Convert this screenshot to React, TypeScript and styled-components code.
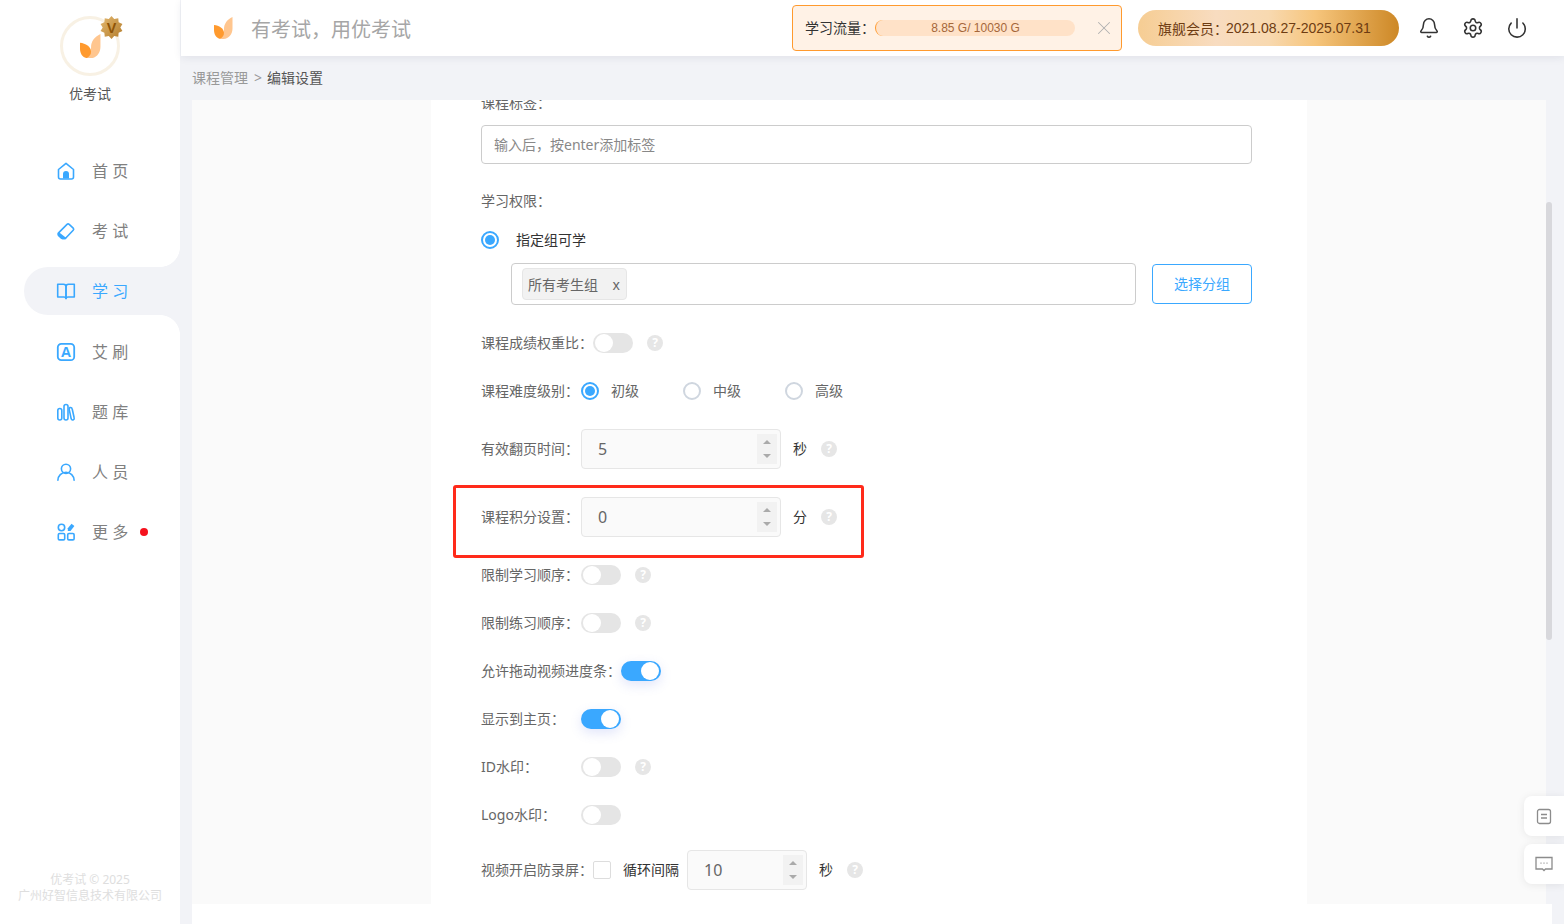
import React from "react";
import styled, { createGlobalStyle } from "styled-components";
import { Bell, Settings, Power, X } from "lucide-react";

const PAGE_BG = "#f2f3f7";
const BLUE = "#3aa8ff";
const ARIAL_STACK = `"Liberation Sans", "Noto Sans CJK SC", sans-serif`;

const Global = createGlobalStyle`
  html, body { margin: 0; padding: 0; height: 100%; overflow: hidden; background: ${PAGE_BG}; }
  body { font-family: "Noto Sans", "Noto Sans CJK SC", sans-serif; font-size: 14px; }
  * { box-sizing: border-box; }
`;

const Shell = styled.div`display: flex; width: 1564px; height: 924px; overflow: hidden; position: relative;`;

/* Sidebar */
const Sidebar = styled.aside`
  width: 180px; flex: none; background: #fff; display: flex; flex-direction: column;
`;
const Brand = styled.div`
  display: flex; flex-direction: column; align-items: center; padding-top: 16px; height: 147px;
`;
const LogoRing = styled.div`
  position: relative; width: 60px; height: 60px; border-radius: 50%; border: 3px solid #f8f1e4;
  display: flex; align-items: center; justify-content: center; background: #fff;
`;
const Badge = styled.svg`position: absolute; top: -3px; right: -6px; width: 23px; height: 23px;`;
const BrandName = styled.div`margin-top: 8px; color: #555; line-height: 20px;`;
const Nav = styled.nav`display: flex; flex-direction: column; gap: 12.2px;`;
const NavItem = styled.div<{ $active?: boolean }>`
  position: relative; height: 48px; margin-left: 24px; padding-left: 33px; display: flex; align-items: center; gap: 17px;
  font-size: 16px; color: ${(p) => (p.$active ? BLUE : "#808080")};
  background: ${(p) => (p.$active ? PAGE_BG : "transparent")};
  border-radius: 24px 0 0 24px;
  ${(p) => p.$active && `
    &::before, &::after { content: ""; position: absolute; right: 0; width: 20px; height: 20px; }
    &::before { top: -20px; background: radial-gradient(circle at 0 0, transparent 19.6px, ${PAGE_BG} 20.2px); }
    &::after { bottom: -20px; background: radial-gradient(circle at 0 100%, transparent 19.6px, ${PAGE_BG} 20.2px); }
  `}
`;
const NavLabel = styled.span`padding-bottom: 2px;`;
const NavIcon = styled.svg`
  width: 18px; height: 18px; flex: none; fill: none; stroke: ${BLUE}; stroke-width: 1.6; overflow: visible;
  stroke-linecap: round; stroke-linejoin: round;
`;
const RedDot = styled.span`width: 8px; height: 8px; border-radius: 50%; background: #f5121d; margin-left: -5px;`;
const Copyright = styled.div`
  margin-top: auto; padding-bottom: 20px; text-align: center; color: #dedede; font-size: 12px; line-height: 16px;
`;

/* Right column */
const Column = styled.div`flex: 1; min-width: 0; display: flex; flex-direction: column; margin-left: 1px;`;
const Header = styled.header`
  height: 56px; flex: none; background: #fff; display: flex; align-items: center; padding: 0 36px 0 33px;
  box-shadow: 0 2px 8px rgba(30, 40, 80, 0.08); position: relative; z-index: 1;
`;
const Title = styled.div`margin-left: 18px; font-size: 20px; color: #a6a6a6;`;
const Alert = styled.div`
  margin-left: auto; width: 330px; height: 46px; background: #fff2e6; border: 1px solid #ff9a2e; border-radius: 4px;
  display: flex; align-items: center; padding-left: 12px; color: #333;
`;
const AlertLabel = styled.span`width: 70px; flex: none; padding-bottom: 2px;`;
const FlowBar = styled.div`
  width: 200px; height: 16px; border-radius: 8px; background: #ffe2c8; border-left: 1px solid #ff9a2e;
  display: flex; align-items: center; justify-content: center; font-family: ${ARIAL_STACK}; font-size: 12px; color: #a5673a;
`;
const CloseBtn = styled.span`margin-left: 18px; display: flex; color: #b0b0b0;`;
const MemberPill = styled.div`
  margin-left: 16px; width: 261px; height: 36px; border-radius: 18px; padding-left: 20px;
  display: flex; align-items: center; color: #6e3c12;
  background: linear-gradient(90deg, #f6cd93 0%, #f8dcc0 30%, #f8d9b0 50%, #f6c57c 68%, #cd8826 100%);
`;
const MemberDate = styled.span`margin-left: -2px; font-family: ${ARIAL_STACK};`;
const HeadIcons = styled.div`margin-left: 19px; display: flex; gap: 22px; color: #333;`;

const Body = styled.main`flex: 1; min-height: 0; padding: 12px 12px 0 11px; display: flex;`;
const Panel = styled.div`
  flex: 1; min-width: 0; display: flex; flex-direction: column; background: ${PAGE_BG}; border-radius: 8px 8px 0 0;
  overflow: hidden;
`;
const Crumbs = styled.div`height: 32px; flex: none; display: flex; align-items: flex-start; line-height: 20px; color: #999;`;
const CrumbSep = styled.span`margin: 0 5px 0 6px;`;
const CrumbNow = styled.span`color: #555;`;
const Content = styled.div`flex: 1; min-height: 0; display: flex;`;
const Viewport = styled.div`flex: 1; min-width: 0; overflow: hidden; background: #fafafa; display: flex; justify-content: center;`;
const Track = styled.div`width: 6px; flex: none;`;
const Thumb = styled.div`margin-top: 102px; height: 438px; background: #d8d8dc; border-radius: 3px;`;
const FootBar = styled.div`height: 20px; flex: none; background: #fff;`;

/* Form */
const Form = styled.form`
  width: 876px; flex: none; background: #fff; padding-left: 50px; margin-top: -9px; height: 830px; color: #666;
  display: flex; flex-direction: column;
`;
const Row = styled.div<{ $h?: number; $mt?: number }>`
  position: relative; flex: none; display: flex; align-items: center; height: ${(p) => p.$h ?? 48}px; margin-top: ${(p) => p.$mt ?? 0}px;
`;
const Label = styled.label`min-width: 100px; flex: none; white-space: nowrap; padding-bottom: 2px;`;
const TagInput = styled.div`
  width: 771px; height: 39px; margin-top: 10px; flex: none; border: 1px solid #ccc; border-radius: 4px;
  display: flex; align-items: center; padding: 0 0 2px 12px; color: #888;
`;
const Radio = styled.span<{ $on?: boolean }>`
  width: 18px; height: 18px; flex: none; border-radius: 50%; border: 2px solid ${(p) => (p.$on ? BLUE : "#cfd6df")};
  background: #fff; display: flex; align-items: center; justify-content: center;
  &::after { content: ""; width: 10px; height: 10px; border-radius: 50%; background: ${(p) => (p.$on ? BLUE : "transparent")}; }
`;
const RadioText = styled.span`margin-left: 17px; color: #333; padding-bottom: 2px;`;
const GroupRow = styled.div`margin: 11px 0 0 30px; width: 741px; flex: none; display: flex; align-items: center; gap: 16px;`;
const GroupBox = styled.div`
  width: 625px; height: 42px; border: 1px solid #ccc; border-radius: 4px; display: flex; align-items: center; padding-left: 10px;
`;
const Tag = styled.span`
  width: 105px; height: 32px; background: #f2f2f2; border: 1px solid #e6e6e6; border-radius: 4px;
  display: flex; align-items: center; justify-content: space-between; padding: 0 6px 0 5px; color: #666;
`;
const OutlineBtn = styled.button`
  width: 100px; height: 40px; background: #fff; border: 1px solid ${BLUE}; border-radius: 4px; color: ${BLUE}; font: inherit; padding: 0 0 2px;
`;
const Toggle = styled.span<{ $on?: boolean }>`
  width: 40px; height: 20px; flex: none; border-radius: 10px; padding: 1px 2px; display: flex;
  justify-content: ${(p) => (p.$on ? "flex-end" : "flex-start")};
  background: ${(p) => (p.$on ? BLUE : "#e5e5e5")};
  box-shadow: ${(p) => (p.$on ? "0 4px 12px rgba(90, 110, 230, 0.18)" : "none")};
  &::after { content: ""; width: 18px; height: 18px; border-radius: 50%; background: #fff; }
`;
const Help = styled.span`
  width: 16px; height: 16px; margin-left: 14px; flex: none; border-radius: 50%; background: #e6e6e6; color: #fff;
  font-size: 12px; font-weight: 700; line-height: 16px; text-align: center;
`;
const Choice = styled.span`display: flex; align-items: center; gap: 12px; margin-right: 44px;`;
const ChoiceText = styled.span`padding-bottom: 2px;`;
const NumberBox = styled.div<{ $w: number }>`
  width: ${(p) => p.$w}px; height: 40px; flex: none; background: #fafafa; border: 1px solid #e6e6e6; border-radius: 4px;
  display: flex; align-items: center; justify-content: space-between; padding: 0 3px 0 16px; font-size: 16px; color: #666;
`;
const Spinner = styled.span`
  width: 20px; height: 30px; background: #f2f2f2; display: flex; flex-direction: column; align-items: center; justify-content: center; gap: 10px;
`;
const ArrowUp = styled.i`width: 0; height: 0; border: 4px solid transparent; border-top: 0; border-bottom: 4px solid #aaa;`;
const ArrowDown = styled.i`width: 0; height: 0; border: 4px solid transparent; border-bottom: 0; border-top: 4px solid #aaa;`;
const Unit = styled.span`margin-left: 12px; color: #333; padding-bottom: 2px;`;
const Check = styled.span`width: 18px; height: 18px; flex: none; border: 1px solid #ddd; border-radius: 2px; background: #fff;`;
const PlainText = styled.span`margin: 0 8px 0 12px; color: #333; padding-bottom: 2px;`;
const RedFrame = styled.div`
  position: absolute; left: -28px; top: 2px; width: 411px; height: 73px; border: 3px solid #ff2a1a; border-radius: 3px; pointer-events: none;
`;

/* Floating buttons */
const Floats = styled.div`position: absolute; right: 0; top: 796px; display: flex; flex-direction: column; gap: 8px; z-index: 2;`;
const FloatBtn = styled.div`
  width: 40px; height: 40px; background: #fff; border-radius: 8px 0 0 8px; display: flex; align-items: center; justify-content: center;
  box-shadow: 0 1px 8px rgba(0, 0, 0, 0.08);
`;
const FloatIcon = styled.svg`width: 18px; height: 18px; fill: none; stroke: #8c8c8c; stroke-width: 1.3;`;

const Leaf = ({ size }: { size: number }) => (
  <svg width={size} height={size * 1.16} viewBox="0 0 19 22">
    <path d="M18.500 0C13 2.500 10 7 10 12C10 16 9 19 5 21.600C7 22 8 22 9 22C14.500 22 18.500 17.500 18.500 11.500Z" fill="#ffc68f" />
    <path d="M0 8C5 8.500 10 11.500 10 16C10 18.500 8.500 20.500 6 21.800C2.500 21 0 18 0 13Z" fill="#ff9a2e" />
  </svg>
);

const starPoints = Array.from({ length: 20 }, (_, i) => {
  const r = i % 2 ? 9.2 : 12;
  const a = (i * Math.PI) / 10;
  return `${(12 + r * Math.sin(a)).toFixed(2)},${(12 - r * Math.cos(a)).toFixed(2)}`;
}).join(" ");

const NavGlyphs: Record<string, React.ReactNode> = {
  home: (
    <>
      <path d="M1.500 7.500 9 1.300l7.500 6.200V15a2 2 0 0 1-2 2h-11a2 2 0 0 1-2-2Z" />
      <path d="M6 16.500V12a3 3 0 0 1 6 0v4.500Z" fill={BLUE} stroke="none" />
    </>
  ),
  exam: (
    <>
      <path d="M1.800 10.600 10 2.400a1.600 1.600 0 0 1 2.200 0l4 3.700a1.600 1.600 0 0 1 0 2.200l-7.400 7.700a1.800 1.800 0 0 1-1 .4H5.600a2 2 0 0 1-1.400-.5L1.800 13.500a2 2 0 0 1 0-2.900Z" />
      <path d="M1.500 11 8.500 16.500H5.200L1.500 13.500Z" fill={BLUE} />
    </>
  ),
  study: (
    <>
      <path d="M.7 2.300H6.500A2.500 2.500 0 0 1 9 4.800V16.500A2 2 0 0 0 7 15H.7Z" />
      <path d="M17.300 2.300H11.500A2.500 2.500 0 0 0 9 4.800V16.500A2 2 0 0 1 11 15H17.300Z" />
    </>
  ),
  brush: (
    <>
      <rect x=".8" y=".8" width="16.400" height="16.400" rx="3.500" strokeWidth="1.8" />
      <text x="9" y="14.200" textAnchor="middle" fontSize="14.500" fontWeight="700" fill={BLUE} stroke="none" fontFamily="Liberation Sans">A</text>
    </>
  ),
  bank: (
    <>
      <rect x=".8" y="5.500" width="4" height="11.500" rx="2" />
      <rect x="7" y="1.500" width="4" height="15.500" rx="2" />
      <path d="M13 4.500a1.900 1.900 0 0 1 2.200 1.500l2 9a1.500 1.500 0 0 1-3 .8l-2-9.500A1.700 1.700 0 0 1 13 4.500Z" />
    </>
  ),
  user: (
    <>
      <circle cx="9" cy="5.800" r="4.600" />
      <path d="M.9 17.300a8.100 8.100 0 0 1 16.200 0" />
    </>
  ),
  more: (
    <>
      <circle cx="4.500" cy="4.500" r="3.200" />
      <rect x="1.300" y="10.500" width="6.400" height="6.400" rx="1.200" />
      <rect x="10.700" y="10.500" width="6.400" height="6.400" rx="1.200" />
      <path d="M14.500 .8 17.400 3 13.500 8H10.800V5.300Z" fill={BLUE} stroke="none" />
    </>
  ),
};

const navItems = [
  { key: "home", label: "首 页" },
  { key: "exam", label: "考 试" },
  { key: "study", label: "学 习", active: true },
  { key: "brush", label: "艾 刷" },
  { key: "bank", label: "题 库" },
  { key: "user", label: "人 员" },
  { key: "more", label: "更 多", dot: true },
];

const HelpMark = () => <Help>?</Help>;

const SpinBox = ({ value, width }: { value: string; width: number }) => (
  <NumberBox $w={width}>
    {value}
    <Spinner>
      <ArrowUp />
      <ArrowDown />
    </Spinner>
  </NumberBox>
);

const toggles = [
  { label: "限制学习顺序：", help: true },
  { label: "限制练习顺序：", help: true },
  { label: "允许拖动视频进度条：", on: true },
  { label: "显示到主页：", on: true },
  { label: "ID水印：", help: true },
  { label: "Logo水印：" },
];

export default function App() {
  return (
    <Shell>
      <Global />
      <Sidebar>
        <Brand>
          <LogoRing>
            <Leaf size={21} />
            <Badge viewBox="0 0 24 24">
              <defs>
                <linearGradient id="gold" x1="0" y1="0" x2="1" y2="1">
                  <stop offset="0" stopColor="#e3b870" />
                  <stop offset="1" stopColor="#b37c2b" />
                </linearGradient>
              </defs>
              <polygon points={starPoints} fill="url(#gold)" />
              <text x="12" y="17.500" textAnchor="middle" fontSize="15" fontWeight="700" fill="#8f5406" fontFamily="Liberation Sans">V</text>
            </Badge>
          </LogoRing>
          <BrandName>优考试</BrandName>
        </Brand>
        <Nav>
          {navItems.map((n) => (
            <NavItem key={n.key} $active={n.active}>
              <NavIcon viewBox="0 0 18 18">{NavGlyphs[n.key]}</NavIcon>
              <NavLabel>{n.label}</NavLabel>
              {n.dot && <RedDot />}
            </NavItem>
          ))}
        </Nav>
        <Copyright>
          优考试 © 2025
          <br />
          广州好智信息技术有限公司
        </Copyright>
      </Sidebar>
      <Column>
        <Header>
          <Leaf size={19} />
          <Title>有考试，用优考试</Title>
          <Alert>
            <AlertLabel>学习流量：</AlertLabel>
            <FlowBar>8.85 G/ 10030 G</FlowBar>
            <CloseBtn><X size={22} strokeWidth={1.1} /></CloseBtn>
          </Alert>
          <MemberPill>旗舰会员：<MemberDate>2021.08.27-2025.07.31</MemberDate></MemberPill>
          <HeadIcons>
            <Bell size={22} strokeWidth={1.7} />
            <Settings size={22} strokeWidth={1.7} />
            <Power size={22} strokeWidth={1.7} />
          </HeadIcons>
        </Header>
        <Body>
          <Panel>
            <Crumbs>
              课程管理<CrumbSep>&gt;</CrumbSep><CrumbNow>编辑设置</CrumbNow>
            </Crumbs>
            <Content>
              <Viewport>
                <Form>
                  <Row $h={24}><Label>课程标签：</Label></Row>
                  <TagInput>输入后，按enter添加标签</TagInput>
                  <Row $h={24} $mt={25}><Label>学习权限：</Label></Row>
                  <Row $h={24} $mt={15}>
                    <Radio $on />
                    <RadioText>指定组可学</RadioText>
                  </Row>
                  <GroupRow>
                    <GroupBox>
                      <Tag>所有考生组<span>x</span></Tag>
                    </GroupBox>
                    <OutlineBtn type="button">选择分组</OutlineBtn>
                  </GroupRow>
                  <Row $mt={14}>
                    <Label>课程成绩权重比：</Label>
                    <Toggle />
                    <HelpMark />
                  </Row>
                  <Row>
                    <Label>课程难度级别：</Label>
                    <Choice><Radio $on /><ChoiceText>初级</ChoiceText></Choice>
                    <Choice><Radio /><ChoiceText>中级</ChoiceText></Choice>
                    <Choice><Radio /><ChoiceText>高级</ChoiceText></Choice>
                  </Row>
                  <Row $h={68}>
                    <Label>有效翻页时间：</Label>
                    <SpinBox value="5" width={200} />
                    <Unit>秒</Unit>
                    <HelpMark />
                  </Row>
                  <Row $h={68}>
                    <RedFrame />
                    <Label>课程积分设置：</Label>
                    <SpinBox value="0" width={200} />
                    <Unit>分</Unit>
                    <HelpMark />
                  </Row>
                  {toggles.map((t) => (
                    <Row key={t.label}>
                      <Label>{t.label}</Label>
                      <Toggle $on={t.on} />
                      {t.help && <HelpMark />}
                    </Row>
                  ))}
                  <Row $h={62}>
                    <Label>视频开启防录屏：</Label>
                    <Check />
                    <PlainText>循环间隔</PlainText>
                    <SpinBox value="10" width={120} />
                    <Unit>秒</Unit>
                    <HelpMark />
                  </Row>
                </Form>
              </Viewport>
              <Track><Thumb /></Track>
            </Content>
            <FootBar />
          </Panel>
        </Body>
      </Column>
      <Floats>
        <FloatBtn>
          <FloatIcon viewBox="0 0 18 18">
            <rect x="2.500" y="2.500" width="13" height="14" rx="2" />
            <path d="M6 7.500h6M6 11h6" />
          </FloatIcon>
        </FloatBtn>
        <FloatBtn>
          <FloatIcon viewBox="0 0 18 18">
            <path d="M1 2.500h16v11.500h-6.500L9 15.500 7.500 14H1Z" />
            <path d="M5.500 8.200h1M8.500 8.200h1M11.500 8.200h1" />
          </FloatIcon>
        </FloatBtn>
      </Floats>
    </Shell>
  );
}
